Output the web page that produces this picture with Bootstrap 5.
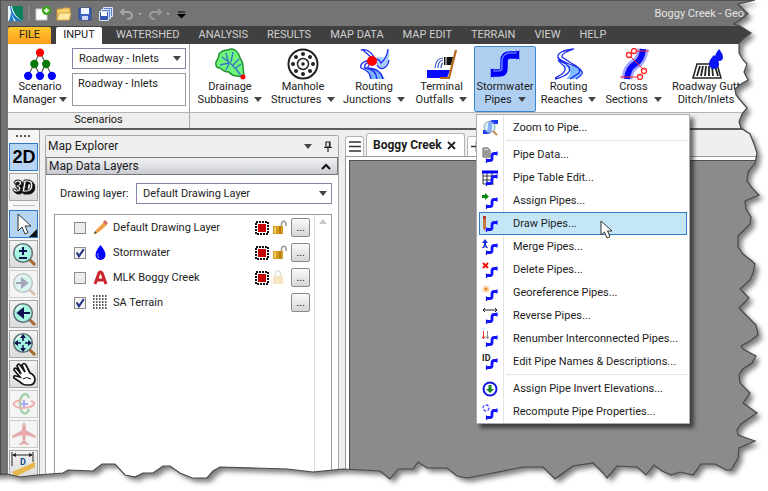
<!DOCTYPE html>
<html lang="en">
<head>
<meta charset="utf-8">
<meta name="viewport" content="width=device-width, initial-scale=1">
<title>Boggy Creek</title>
<link href="https://cdn.jsdelivr.net/npm/bootstrap@5.3.0/dist/css/bootstrap.min.css" rel="stylesheet">
<style>
body{font-family:Roboto,"Noto Sans",sans-serif;font-size:11px;line-height:13px;color:#1c1c1c;background:#fff}
button,select,input{font:inherit;color:inherit}
svg{display:block;flex:none}
.shell{min-height:100vh;background:#747474;padding-left:7px;border-left:1px solid #4c4c4c;border-top:1px solid #555;overflow:hidden}
.titlebar{height:25px;color:#e4e4e4;padding-right:24px}
.titlebar button{background:none;border:0;padding:0}
.quick{gap:5px}
.tabs{height:18px;background:#404040;padding-top:1px}
.tabs a{color:#d0d0d0;text-decoration:none;padding:0 10px 0 9px;line-height:16px}
.tabs .file{background:linear-gradient(#ffc82e,#ff9d1c);color:#222;width:43px;padding:0;text-align:center;margin-right:5px;border-radius:2px 2px 0 0}
.tabs .current{background:#fff;color:#222;width:46px;padding:0;text-align:center;margin-right:5px;border-radius:2px 2px 0 0}
.ribbon{background:#fff;height:68px}
.ribbon-names{background:#eee;height:16px;border-top:1px solid #b4b4b4;text-align:center}
.scenario{width:182px;border-right:1px solid #a8a8a8}
.manager{width:64px}
.scenbox{width:114px}
.ribbon button{background:none;border:1px solid transparent;padding:1px 0 0;white-space:nowrap;display:flex;flex-direction:column;align-items:center;justify-content:flex-start}
.ribbon button.manager{padding-top:3px}
.ribbon .opened{background:#b0d0f2;border-color:#3c86cc;border-radius:2px}
.tools-grid{display:grid;grid-template-columns:74px 72px 70px 65px 62px 65px 65px 80px;padding:2px 0 0 3px}
.caret{display:inline-block;border:4px solid transparent;border-top:5px solid #444;border-bottom:0;margin-left:3px;vertical-align:1px}
.pick{appearance:none;border:1px solid #8682a4;border-radius:0;height:21px;padding:0 6px;width:100%;background:#fff}
.pickwrap{position:relative}
.pickwrap .caret{position:absolute;right:5px;top:8px;margin:0}
.curbox{border:1px solid #999;height:33px;padding:3px 5px}
.work{background:#efefef;border-top:2px solid #5c5c5c}
.toolcol{width:32px;background:#f6f6f6;border-right:1px solid #a0a0a0;padding:3px 0 0 1px}
.toolcol button{width:29px;height:28px;margin-bottom:2px;padding:0;border:1px solid #a6a6a6;background:linear-gradient(#f3f3f3,#dcdcdc);display:flex;align-items:center;justify-content:center}
.toolcol button.on{background:#b6d5f3;border-color:#2f7dc8}
.toolcol button:disabled{border-color:#ccc;background:#f4f4f4}
.toolcol button:disabled svg{opacity:.35}
.solid3d{filter:drop-shadow(1px 1px 0 #111) drop-shadow(1px 1px 0 #111)}
.explorer{width:294px;margin:5px 6px 0 5px;border:1px solid #a8a8a8;border-bottom:0;border-radius:3px 3px 0 0;background:#fff}
.exp-title{height:21px;background:#efefef;padding:0 6px 0 2px;font-size:12px}
.exp-section{height:18px;border:1px solid #777;border-left-color:#999;background:linear-gradient(#f2f3f5,#c9ccd2);font-size:12px;padding:0 6px 0 2px}
.exp-section button,.exp-title button,.doctabs button{border:0;background:none;padding:0}
.drawrow{padding:8px 6px 0 14px}
.drawrow label{width:76px}
.layers{margin:10px 6px 0 8px;border:1px solid #999;border-bottom:0}
.layer{height:25px;padding:0 4px 0 19px}
.layer .form-check-input{width:12px;height:12px;margin:0 7px 0 0;border-radius:0;border:1px solid #8c8c8c;background-color:#ececec;flex:none}
.layer .form-check-input:checked{background-color:#f4f4f4;background-size:13px;background-image:url("data:image/svg+xml,%3csvg xmlns='http://www.w3.org/2000/svg' viewBox='0 0 12 12'%3e%3cpath fill='none' stroke='%23283a86' stroke-width='2' d='M3 5.5 5 9 9.5 2.5'/%3e%3c/svg%3e")}
.layer label{margin-left:5px}
.more{width:19px;height:19px;border:1px solid #8a8a8a;border-radius:2px;background:linear-gradient(#fafafa,#d6d6d6);padding:0;line-height:15px}
.scroll{width:17px;border-left:1px solid #ddd;padding-top:4px}
.docs{padding-top:3px}
.doctabs{height:23px;gap:2px}
.doctabs .cell{background:#fff;border:1px solid #b4b4b4;border-bottom:0;border-radius:3px 3px 0 0}
.doctabs .burger{width:19px;height:20px;margin-top:3px;display:flex;align-items:center;justify-content:center}
.doctabs .doc{width:99px;height:23px;padding:0 8px 0 6px;font-weight:700;font-size:12px}
.canvas{background:#8b8b8b;border:1px solid #505050;border-width:1px 0 0 1px;box-shadow:0 0 0 3px #fff,0 0 0 4px #999;margin:4px 0 0 4px}
.menu-pipes{display:block;top:68px;left:2px;width:214px;padding:1px 2px 0;margin:0;border-radius:0;border:1px solid #a9adb3;background:#fff linear-gradient(#e3e3e3,#e3e3e3) 26px 0/1px 100% no-repeat;box-shadow:4px 4px 4px rgba(0,0,0,.55);font-size:11px;z-index:5}
.menu-pipes .dropdown-item{height:23px;padding:0 0 0 2px;display:flex;align-items:center;gap:15px;color:#1c1c1c;border:1px solid transparent;line-height:13px}
.menu-pipes .dropdown-item.hot{background:#c5e6f7;border-color:#2f7dc8}
.menu-pipes .dropdown-divider{height:0;margin:1px 0 2px 28px;border-top:1px dotted #ccc;opacity:1}
.pointer{position:absolute;left:123px;top:105px}
.tear{position:absolute;inset:0;width:100%;height:100%;pointer-events:none;z-index:20}
</style>
</head>
<body>
<svg width="0" height="0" class="position-absolute" aria-hidden="true">
<defs>
<symbol id="pipe" viewBox="0 0 16 16"><path d="M4 13.500h4q2 0 2-2V9q0-2.500 2.500-2.500H15" fill="none" stroke="#1212ff" stroke-width="2.800"/><path d="M4.500 11.500V16M15 4.500v4" stroke="#1212ff" stroke-width="1.200"/></symbol>
<symbol id="lens" viewBox="0 0 26 26"><path d="m18 18 6 6" stroke="#a5672c" stroke-width="3"/><circle cx="12" cy="12" r="9.3" fill="#a5f5e0" stroke="#65757a" stroke-width="1.6"/><path d="M5.500 9q2-4 6-4" stroke="#e6fffa" stroke-width="2" fill="none"/></symbol>
<symbol id="sel" viewBox="0 0 14 14"><path d="M1 1h12v12H1z" fill="none" stroke="#111" stroke-width="2" stroke-dasharray="2 1"/><path d="M2.500 2.500h9v9h-9z" fill="#c40000" stroke="#fff"/></symbol>
<symbol id="unlock" viewBox="0 0 14 15"><path d="M8.500 7V4q0-2.800 2.200-2.800T13 4v2" fill="none" stroke="#999" stroke-width="1.500"/><path d="M0 6h10v8H0z" fill="#d69a1c"/><path d="M1 7h2v6H1z" fill="#f2cc68"/><path d="M6 6h2v8H6z" fill="#b87c10"/></symbol>
<clipPath id="outside"><path clip-rule="evenodd" d="M-5-5H773V496H-5Z M-9-9 755 0 747 2 738 4 742 8 748 14 740 20 734 24 740 26 751 33 744 38 739 43 739 53 743 60 747 64 744 72 748 80 741 84 735 89 736 95 741 101 747 108 742 114 739 122 741 128 750 134 754 144 757 153 755 163 748 172 747 181 753 189 759 195 745 201 746 209 751 217 750 224 745 229 738 236 738 247 743 254 752 261 755 264 753 273 750 280 740 289 749 298 739 308 748 317 756 325 758 335 750 341 741 346 743 349 756 356 752 363 743 369 739 375 740 383 750 393 743 403 757 413 748 419 741 424 737 430 738 435 755 441 739 448 738 458 733 467 731 470 726 470 715 464 701 464 693 475 680 472 671 475 662 471 654 465 646 475 637 467 617 466 607 478 603 473 593 463 573 466 563 473 555 479 543 467 523 467 493 473 467 478 457 476 447 468 427 468 418 462 413 469 398 469 390 479 380 471 343 469 313 472 287 469 220 467 213 471 207 478 192 478 180 473 170 466 163 466 153 473 143 473 135 477 125 475 115 464 102 464 93 471 68 470 63 473 37 475 20 477 7 474-9 475Z"/></clipPath>
<filter id="soft" x="-5%" y="-5%" width="110%" height="110%"><feGaussianBlur stdDeviation="2.500"/></filter>
</defs></svg>

<div class="shell d-flex flex-column">
 <header class="titlebar d-flex align-items-center justify-content-between">
  <div class="quick d-flex align-items-center">
   <svg width="15" height="15" viewBox="0 0 15 15"><path d="M0 0h15v15H0z" fill="#087f5b"/><path d="M0 0h4q2 11 11 15H0z" fill="#eaf6ff"/><path d="M3 0q1 11 12 15H8Q3 10 2 0M1 15q2-5 2-9 1 5 3 9z" fill="#1678c4"/></svg>
   <svg width="2" height="15"><path d="M1 0v15" stroke="#959595"/></svg>
   <button aria-label="New"><svg width="16" height="16"><path d="M1 3h11v11H1z" fill="#fff" stroke="#ccc"/><circle cx="11.500" cy="4.500" r="4.500" fill="#3fa51c"/><path d="M9 4.500h5M11.500 2v5" stroke="#fff" stroke-width="1.500"/></svg></button>
   <button aria-label="Open"><svg width="16" height="16"><path d="M1 14V3h5l1-1h7v11z" fill="#f7d36b" stroke="#c8963c"/><path d="M1 14 3 7h12l-2 7z" fill="#ffeaa2" stroke="#d5a447"/></svg></button>
   <button aria-label="Save"><svg width="16" height="16"><path d="M2 2h12v12H2z" fill="#3d62bf" stroke="#2c4790"/><path d="M4 2h8v6H4z" fill="#f1f5ff"/><path d="M5 10h6v4H5z" fill="#ccd7ef"/></svg></button>
   <button aria-label="Save all"><svg width="16" height="16"><path d="M5.500 1.500h9v9h-9z" fill="#5f80cc" stroke="#dce5fa"/><path d="M3.500 3.500h9v9h-9z" fill="#5f80cc" stroke="#dce5fa"/><path d="M1.500 5.500h9v9h-9z" fill="#3459b5" stroke="#dce5fa"/><path d="M3 6h6v4H3z" fill="#fff"/></svg></button>
   <button aria-label="Undo"><svg width="24" height="16"><path d="M5 3 2 6l3 3M2 6h7q4 0 4 3.500T8 13" fill="none" stroke="#a6a6a6" stroke-width="2"/><path d="M19 7h4l-2 2z" fill="#b0b0b0"/></svg></button>
   <button aria-label="Redo"><svg width="24" height="16"><path d="m10 3 3 3-3 3m3-3H6q-4 0-4 3.500T7 13" fill="none" stroke="#999" stroke-width="2"/><path d="M18 7h4l-2 2z" fill="#b0b0b0"/></svg></button>
   <button aria-label="Customize"><svg width="9" height="10"><path d="M1 3h7" stroke="#000"/><path d="M0 5h9L4.500 9.500z" fill="#000"/></svg></button>
  </div>
  <span>Boggy Creek - Geo</span>
 </header>
 <nav class="tabs d-flex">
  <a class="file" href="#">FILE</a><a class="current" href="#">INPUT</a><a href="#">WATERSHED</a><a href="#">ANALYSIS</a><a href="#">RESULTS</a><a href="#">MAP DATA</a><a href="#">MAP EDIT</a><a href="#">TERRAIN</a><a href="#">VIEW</a><a href="#">HELP</a>
 </nav>
 <section class="ribbon d-flex">
  <div class="scenario d-flex">
   <button class="manager"><svg width="32" height="32" viewBox="0 0 31 31"><path d="M15.500 4 4 27M15.500 4 27 27M10 15l5.500 12M21 15l-5.500 12" stroke="#333"/><circle cx="15.500" cy="4.500" r="4" fill="red"/><g fill="#087808"><circle cx="10" cy="15.500" r="4"/><circle cx="21.500" cy="15.500" r="4"/></g><g fill="#00f"><circle cx="4" cy="27" r="4"/><circle cx="15.500" cy="27" r="4"/><circle cx="27" cy="27" r="4"/></g></svg><span>Scenario<br>Manager<span class="caret"></span></span></button>
   <div class="scenbox pt-1">
    <div class="pickwrap mb-1"><select class="pick" aria-label="Scenario"><option>Roadway - Inlets</option></select><span class="caret"></span></div>
    <div class="curbox">Roadway - Inlets</div>
   </div>
  </div>
  <div class="tools-grid">
   <button><svg width="32" height="32" viewBox="0 0 32 32"><path d="M5 6q3-4 9-4 3-2 7 0 4 3 5 8 3 4 3 8l1 11-7-1q-5 0-8-4-5 0-9-4-5 0-4-6 3-4 3-8z" fill="#6ff47c" stroke="#239132" stroke-width="1.500"/><path d="m8 9 8 6 6 6 6 8M12 5l2 8M19 4l-2 10m8-3-6 6M6 17l9-2m-3 7 3-6m12 0-5 4" fill="none" stroke="#3674c8" stroke-width="1.300"/><circle cx="29" cy="29" r="2.500" fill="red"/></svg><span>Drainage<br>Subbasins <span class="caret"></span></span></button>
   <button><svg width="32" height="32" viewBox="0 0 32 32"><circle cx="16" cy="16" r="14.500" fill="#fff" stroke="#222" stroke-width="2"/><circle cx="16" cy="16" r="5.500" fill="none" stroke="#222" stroke-width="1.500"/><g fill="#222"><circle cx="16" cy="16" r="1.800"/><circle cx="16" cy="6" r="2"/><circle cx="16" cy="26" r="2"/><circle cx="6" cy="16" r="2"/><circle cx="26" cy="16" r="2"/><circle cx="9" cy="9" r="2"/><circle cx="23" cy="9" r="2"/><circle cx="9" cy="23" r="2"/><circle cx="23" cy="23" r="2"/></g></svg><span>Manhole<br>Structures <span class="caret"></span></span></button>
   <button><svg width="32" height="32" viewBox="0 0 32 32"><path d="M19 17q3 5 7 3t5-12V1q-3 8-5 9-2-2-12 0z" fill="#a8ccff"/><path d="M8 19q12 1 19 12H12q0-8-8-11z" fill="#7eb2ff"/><path d="M3 2q5-1 7 1 4 2 7 8M5 2l10 9M13 12Q1 14 3 20q9 3 10 11M15 13Q5 15 7 20q11 1 12 11M17 13Q9 17 10 20q13 1 15 11M16 12q5-2 7 3 6-5 7-14M19 17q3 5 7 3t5-8" fill="none" stroke="#1c2cf0" stroke-width="1.300"/><circle cx="14" cy="13" r="5" fill="red"/></svg><span>Routing<br>Junctions <span class="caret"></span></span></button>
   <button><svg width="34" height="32" viewBox="0 0 34 32"><path d="M2 22h23l-3 8H2z" fill="#0a0aff"/><path d="m31 2-7 28H15" fill="none" stroke="#b36a1e" stroke-width="2.200"/><path d="M19 9h9l-2 8h-7z" fill="#111"/><path d="M18 10Q11 10 10 20M18 12q-5 1-5 8M18 15q-2 1-2 5" fill="none" stroke="#3856c8" stroke-width="1.200"/><path d="M21 9v8" stroke="#fff"/></svg><span>Terminal<br>Outfalls <span class="caret"></span></span></button>
   <div class="dropdown">
    <button class="opened w-100 h-100" aria-expanded="true"><svg width="32" height="32" viewBox="0 0 32 32"><path d="M4 25h6q5 0 5-5v-7q0-6 6-6h7" fill="none" stroke="#0000fa" stroke-width="7.500"/><path d="M4 23h6q3 0 3-4v-7q1-6 7-7h8" fill="none" stroke="#7ea0ff" stroke-width="1.200"/><path d="M3 19.500v11M29 1.500v11" stroke="#0000fa" stroke-width="2.500"/><g fill="#fff"><circle cx="3" cy="20" r="1"/><circle cx="3" cy="30" r="1"/><circle cx="29" cy="2" r="1"/><circle cx="29" cy="12" r="1"/></g></svg><span>Stormwater<br>Pipes <span class="caret"></span></span></button>
    <div class="dropdown-menu menu-pipes">
     <a class="dropdown-item" href="#"><svg width="16" height="16"><path d="M1 12h4q3 0 3-4V5q0-3 4-3h4" fill="none" stroke="#1c39f5" stroke-width="4"/><circle cx="7.500" cy="7" r="5.500" fill="#bdeaf8" fill-opacity=".65" stroke="#8ba4b4"/><path d="m11 11 4 4" stroke="#bf8a5a" stroke-width="2"/></svg>Zoom to Pipe...</a>
     <div class="dropdown-divider"></div>
     <a class="dropdown-item" href="#"><svg width="16" height="16"><path d="M1 1h5l2 2v7H1z" fill="#ddd" stroke="#555"/><path d="M2 4h5M2 6h5M2 8h5" stroke="#555"/><use href="#pipe"/></svg>Pipe Data...</a>
     <a class="dropdown-item" href="#"><svg width="16" height="16"><path d="M1 2v12h11M1 6h14M1 10h9M5 2v12M10 2v12" fill="none" stroke="#333"/><path d="M0 2h16" stroke="#00f" stroke-width="3"/><use href="#pipe"/></svg>Pipe Table Edit...</a>
     <a class="dropdown-item" href="#"><svg width="16" height="16"><path d="M0 2h3V0l4 3.500L3 7V5H0z" fill="#07850c"/><use href="#pipe"/></svg>Assign Pipes...</a>
     <a class="dropdown-item hot" href="#"><svg width="16" height="16"><path d="M1 3h3v9l-1.500 3L1 12z" fill="#c77440"/><path d="M1 0h3v3H1z" fill="#b33"/><use href="#pipe"/></svg>Draw Pipes...</a>
     <a class="dropdown-item" href="#"><svg width="16" height="16"><path d="M3 0 0 4h2v2L0 9h2l1-2 1 2h2L4 6V4h2z" fill="#1a2ad8"/><use href="#pipe"/></svg>Merge Pipes...</a>
     <a class="dropdown-item" href="#"><svg width="16" height="16"><path d="m1 1 5 5m0-5L1 6" stroke="#f01010" stroke-width="2"/><use href="#pipe"/></svg>Delete Pipes...</a>
     <a class="dropdown-item" href="#"><svg width="16" height="16"><circle cx="4" cy="4" r="3.500" fill="#ffd9b0"/><circle cx="4" cy="4" r="1.500" fill="#e8801c"/><use href="#pipe"/></svg>Georeference Pipes...</a>
     <a class="dropdown-item" href="#"><svg width="16" height="16"><path d="M2 2h12M3 0 1 2l2 2M13 0l2 2-2 2" fill="none" stroke="#222"/><use href="#pipe"/></svg>Reverse Pipes...</a>
     <a class="dropdown-item" href="#"><svg width="16" height="16"><path d="M1.500 0v7M0 5.500 1.500 8 3 5.500" fill="none" stroke="#e33"/><path d="M5.500 0v7M4 5.500 5.500 8 7 5.500" fill="none" stroke="#888"/><use href="#pipe"/></svg>Renumber Interconnected Pipes...</a>
     <a class="dropdown-item" href="#"><svg width="16" height="16"><text x="0" y="7" font-size="9" font-weight="700" fill="#222">ID</text><use href="#pipe"/></svg>Edit Pipe Names &amp; Descriptions...</a>
     <div class="dropdown-divider"></div>
     <a class="dropdown-item" href="#"><svg width="16" height="16"><circle cx="8" cy="8" r="6.500" fill="#fff" stroke="#1414e8" stroke-width="2"/><path d="M6.500 4h3v4H12l-4 4-4-4h2.500z" fill="#168020"/></svg>Assign Pipe Invert Elevations...</a>
     <a class="dropdown-item" href="#"><svg width="16" height="16"><circle cx="4" cy="4" r="3" fill="none" stroke="#4646ff" stroke-width="1.300" stroke-dasharray="3 1.500"/><use href="#pipe"/></svg>Recompute Pipe Properties...</a>
     <svg class="pointer" width="14" height="20"><path d="M1 1v14l3.500-3 2.500 6 3-1.500L7.500 11H12z" fill="#fff" stroke="#333"/></svg>
    </div>
   </div>
   <button><svg width="32" height="32" viewBox="0 0 32 32"><path d="M11 17q17 1 18 6 0 5-7 8h-9q9-7-2-14z" fill="#7cbcff"/><path d="M21 1Q4 3 5 9q1 3 11 7 15 5 13 10-2 3-6 5M21 1Q8 5 9 9q3 2 9 6 11 5 8 10l-9 6M5 9q0 4 8 7 6 4 2 9-4 4-13 6M5 12q2 3 6 6 3 4-2 8l-7 4" fill="none" stroke="#1c2cf0" stroke-width="1.300"/></svg><span>Routing<br>Reaches <span class="caret"></span></span></button>
   <button><svg width="32" height="32" viewBox="0 0 32 32"><path d="M9 31q1-11 8-15t8-15" fill="none" stroke="#a5a5ff" stroke-width="11"/><path d="M9 31q1-11 8-15t8-15" fill="none" stroke="#0808ff" stroke-width="6"/><path d="M17 3h14M2 29h21M11 7l15 15" stroke="#f22"/><g fill="#fff" stroke="#f22" stroke-width="1.300"><circle cx="16" cy="3" r="2.500"/><circle cx="11" cy="7" r="2.500"/><circle cx="26" cy="23" r="2.500"/><circle cx="22" cy="29" r="2.500"/></g></svg><span>Cross<br>Sections <span class="caret"></span></span></button>
   <button><svg width="34" height="32" viewBox="0 0 34 32"><path d="M8 16h20l4 14H4z" fill="#fff" stroke="#222" stroke-width="1.500"/><path d="m11 18-3 10m6-10-2 10m5-10-1 10m4-10v10m3-10 1 10m2-10 3 10" stroke="#222" stroke-width="1.800"/><path d="M30 1q-4 5-4 8a4 4 0 0 0 8 0q0-3-4-8M25 7q-5 5-5 9a5 5 0 0 0 10 0q0-4-5-9" fill="#0914f7"/></svg><span>Roadway Gutt<br>Ditch/Inlets</span></button>
  </div>
 </section>
 <div class="ribbon-names d-flex"><div class="scenario">Scenarios</div></div>

 <main class="work d-flex flex-grow-1">
  <aside class="toolcol">
   <svg width="29" height="6" class="mb-1"><path d="M7 3h16" stroke="#555" stroke-width="2" stroke-dasharray="2 2"/></svg>
   <button class="on" aria-label="2D"><svg width="28" height="26"><text x="14" y="19" text-anchor="middle" font-family="Liberation Sans" font-weight="700" font-size="18">2D</text></svg></button>
   <button aria-label="3D"><svg width="28" height="26"><text class="solid3d" x="13" y="18" fill="#fff" stroke="#111" stroke-width=".8" font-family="Liberation Sans" font-weight="700" font-style="italic" font-size="16" text-anchor="middle">3D</text></svg></button>
   <hr class="my-1 mx-1">
   <button class="on" aria-label="Select"><svg width="27" height="26"><path d="M8 3v17l4-4 3 7 3-1.500-3-6.500h6z" fill="#fff" stroke="#333"/><path d="M27 18v8h-8z" fill="#111"/></svg></button>
   <button aria-label="Zoom"><svg width="26" height="26"><use href="#lens"/><path d="M8 10h8M12 6v8M8 17h8" stroke="#101050" stroke-width="2"/></svg></button>
   <button disabled aria-label="Next view"><svg width="26" height="26"><use href="#lens"/><path d="M5 12h9M11 8l5 4-5 4z" fill="#101050" stroke="#101050" stroke-width="2"/></svg></button>
   <button aria-label="Previous view"><svg width="26" height="26"><use href="#lens"/><path d="M10 12h9M12 8l-5 4 5 4z" fill="#101050" stroke="#101050" stroke-width="2"/></svg></button>
   <button aria-label="Zoom extents"><svg width="26" height="26"><use href="#lens"/><path d="m12 3 3 4h-6zM12 21l3-4H9zM3 12l4-3v6zM21 12l-4-3v6z" fill="#101050"/><path d="M12 5v5m0 4v5M5 12h5m4 0h5" stroke="#101050" stroke-width="1.500"/></svg></button>
   <button aria-label="Pan"><svg width="26" height="26"><path d="M16 24q-4 0-7-3l-6-4q-1-3 2-2l4 1-6-7q0-3 3-1l4 5-4-8q1-3 3-1l5 7-3-7q2-3 4 0l4 8q5 2 5 7-1 5-5 5z" fill="#fff" stroke="#111" stroke-width="1.700"/><path d="M12 18q3-3 8 0" fill="none" stroke="#111"/></svg></button>
   <button disabled aria-label="Orbit"><svg width="26" height="26"><path d="M18 7q-2-6-6-3-3 3-3 9t3 9q4 2 6-4" fill="none" stroke="#17912a" stroke-width="2.500"/><path d="M10 9q-9 2-7 5 4 5 16 2 8-4 1-6" fill="none" stroke="#e23030" stroke-width="2"/><path d="M13 9v7m-3-3h7" stroke="#22f" stroke-width="2"/></svg></button>
   <button disabled aria-label="Fly"><svg width="26" height="26"><path d="M13 1q2 2 2 8l10 6v2l-10-3-1 6 4 3v1l-5-1-5 1v-1l4-3-1-6-10 3v-2l10-6q0-6 2-8" fill="#c82222"/></svg></button>
   <button aria-label="Measure distance"><svg width="27" height="26"><path d="M2 1v14M23 1v10M3 4h19" stroke="#222"/><path d="m2 4 4-2v4zM23 4l-4-2v4z" fill="#222"/><text x="10" y="14" font-size="9" font-weight="700" fill="#114a8c">D</text><path d="m2 21 23-10v5L5 26z" fill="#e7b74c"/></svg></button>
  </aside>

  <section class="explorer d-flex flex-column">
   <div class="exp-title d-flex align-items-center"><span class="me-auto">Map Explorer</span><span class="caret me-2"></span><button class="ms-1" aria-label="Pin"><svg width="8" height="11"><path d="M2 1h4v5H2zM0 6.500h8M4 7v4M5.500 1v5" fill="none" stroke="#222" stroke-width="1.200"/></svg></button></div>
   <div class="exp-section d-flex align-items-center"><span class="me-auto">Map Data Layers</span><button aria-label="Collapse"><svg width="10" height="7"><path d="m1 6 4-4 4 4" fill="none" stroke="#111" stroke-width="2"/></svg></button></div>
   <div class="drawrow d-flex align-items-center"><label class="flex-shrink-0" for="dl">Drawing layer:</label><div class="pickwrap flex-grow-1"><select id="dl" class="pick"><option>Default Drawing Layer</option></select><span class="caret"></span></div></div>
   <div class="layers d-flex flex-grow-1">
    <div class="flex-grow-1">
     <div class="layer d-flex align-items-center"><input class="form-check-input" type="checkbox" id="l1"><svg width="15" height="15"><path d="M1 14l2-4 8-8 3 3-8 7z" fill="#efa24a"/><path d="m10 2 2-2 3 3-2 2z" fill="#d96868"/><path d="m1 14 1-3 2 2z" fill="#4a3212"/></svg><label class="me-auto" for="l1">Default Drawing Layer</label><svg class="me-1" width="14" height="14"><use href="#sel"/></svg><svg class="me-1" width="14" height="15"><use href="#unlock"/></svg><button class="more">...</button></div>
     <div class="layer d-flex align-items-center"><input class="form-check-input" type="checkbox" id="l2" checked><svg width="15" height="15"><path d="M7.500 0q5 6 5 10a5 5 0 0 1-10 0q0-4 5-10z" fill="#00f"/><path d="M5 8q-1 3 1 5" fill="none" stroke="#88f"/></svg><label class="me-auto" for="l2">Stormwater</label><svg class="me-1" width="14" height="14"><use href="#sel"/></svg><svg class="me-1" width="14" height="15"><use href="#unlock"/></svg><button class="more">...</button></div>
     <div class="layer d-flex align-items-center"><input class="form-check-input" type="checkbox" id="l3"><svg width="15" height="15"><path d="M2 14 6 3q1-2 3 0l4 11M4 10h8" fill="none" stroke="#c9242b" stroke-width="3"/></svg><label class="me-auto" for="l3">MLK Boggy Creek</label><svg class="me-1" width="14" height="14"><use href="#sel"/></svg><svg class="me-1 opacity-25" width="14" height="15"><path d="M2.500 6V4q0-3 2.500-3t2.500 3v2" fill="none" stroke="#888" stroke-width="1.500"/><path d="M0 6h10v8H0z" fill="#d69a1c"/></svg><button class="more">...</button></div>
     <div class="layer d-flex align-items-center"><input class="form-check-input" type="checkbox" id="l4" checked><svg width="15" height="15"><path d="M0 1h15M0 4h15M0 7h15M0 10h15M0 13h15" stroke="#222" stroke-width="1.500" stroke-dasharray="1.500 1.500"/></svg><label class="me-auto" for="l4">SA Terrain</label><button class="more">...</button></div>
    </div>
    <div class="scroll"><svg class="mx-auto" width="8" height="5"><path d="M0 5 4 0l4 5z" fill="#c8c8c8"/></svg></div>
   </div>
  </section>

  <section class="docs flex-grow-1 d-flex flex-column">
   <div class="doctabs d-flex">
    <button class="cell burger" aria-label="Documents"><svg width="12" height="13"><path d="M0 2h12M0 6.500h12M0 11h12" stroke="#333" stroke-width="1.600"/></svg></button>
    <div class="cell doc d-flex align-items-center justify-content-between">Boggy Creek<button aria-label="Close"><svg width="9" height="9"><path d="m1 1 7 7m0-7L1 8" stroke="#222" stroke-width="1.800"/></svg></button></div>
    <button class="cell burger" aria-label="Add"><svg width="11" height="11"><path d="M0 5.500h11M5.500 0v11" stroke="#333" stroke-width="1.500"/></svg></button>
   </div>
   <div class="canvas flex-grow-1"></div>
  </section>
 </main>
</div>

<svg class="tear" viewBox="0 0 768 491" preserveAspectRatio="none" aria-hidden="true">
 <defs><path id="edge" d="M-9-9 755 0 747 2 738 4 742 8 748 14 740 20 734 24 740 26 751 33 744 38 739 43 739 53 743 60 747 64 744 72 748 80 741 84 735 89 736 95 741 101 747 108 742 114 739 122 741 128 750 134 754 144 757 153 755 163 748 172 747 181 753 189 759 195 745 201 746 209 751 217 750 224 745 229 738 236 738 247 743 254 752 261 755 264 753 273 750 280 740 289 749 298 739 308 748 317 756 325 758 335 750 341 741 346 743 349 756 356 752 363 743 369 739 375 740 383 750 393 743 403 757 413 748 419 741 424 737 430 738 435 755 441 739 448 738 458 733 467 731 470 726 470 715 464 701 464 693 475 680 472 671 475 662 471 654 465 646 475 637 467 617 466 607 478 603 473 593 463 573 466 563 473 555 479 543 467 523 467 493 473 467 478 457 476 447 468 427 468 418 462 413 469 398 469 390 479 380 471 343 469 313 472 287 469 220 467 213 471 207 478 192 478 180 473 170 466 163 466 153 473 143 473 135 477 125 475 115 464 102 464 93 471 68 470 63 473 37 475 20 477 7 474-9 475Z"/></defs>
 <g clip-path="url(#outside)"><path d="M0 0h768v491H0z" fill="#fff"/><use href="#edge" x="4" y="4" fill="#000" fill-opacity=".5" filter="url(#soft)"/></g>
 <use href="#edge" fill="none" stroke="#484848" stroke-width="1.200"/>
</svg>
<script src="https://cdn.jsdelivr.net/npm/bootstrap@5.3.0/dist/js/bootstrap.bundle.min.js"></script>
</body>
</html>
